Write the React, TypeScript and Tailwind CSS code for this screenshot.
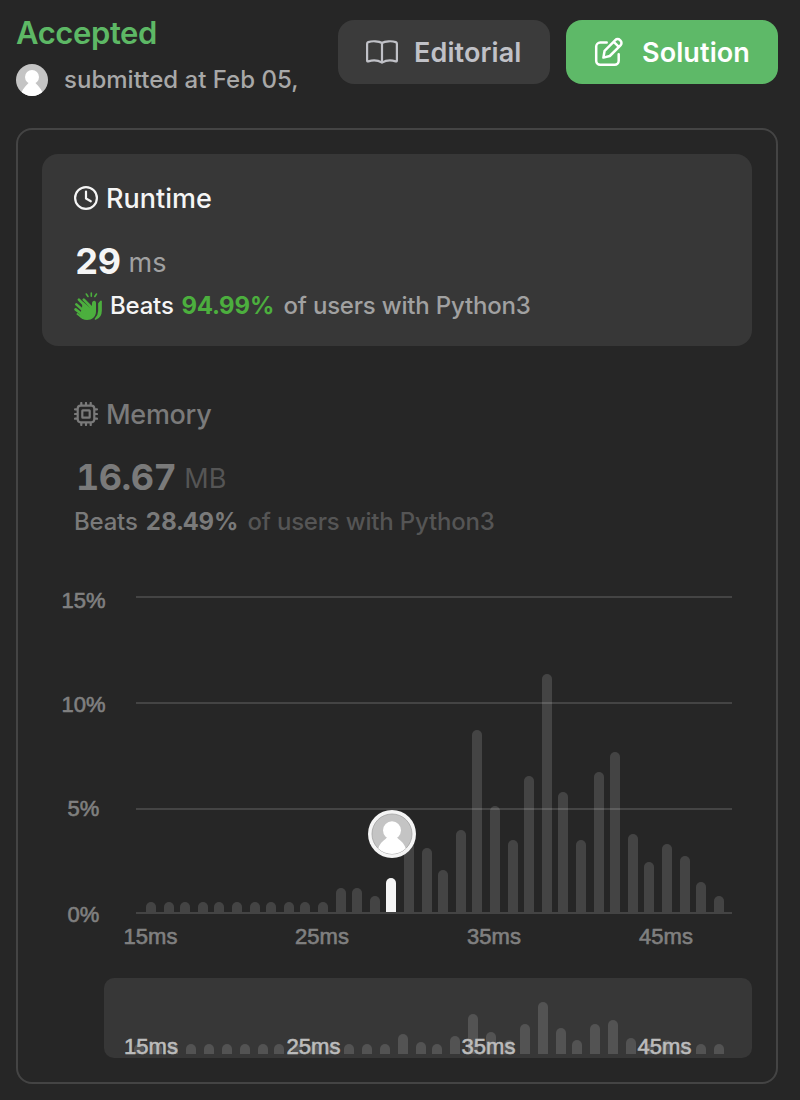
const BASELINE = 912;

const bars: [number, number][] = [
  [146, 902], [164, 902], [180, 902], [198, 902], [214, 902], [232, 902], [250, 902],
  [266, 902], [284, 902], [300, 902], [318, 902], [336, 888], [352, 888], [370, 896],
  [386, 878], [404, 840], [422, 848], [438, 870], [456, 830], [472, 730], [490, 806],
  [508, 840], [524, 776], [542, 674], [558, 792], [576, 840], [594, 772], [610, 752],
  [628, 834], [644, 862], [662, 844], [680, 856], [696, 882], [714, 896],
];

const miniBars: [number, number][] = [
  [134, 1044], [152, 1044], [168, 1044], [186, 1044], [204, 1044], [222, 1044], [240, 1044],
  [258, 1044], [274, 1044], [292, 1044], [310, 1044], [328, 1044], [344, 1044], [362, 1044],
  [380, 1044], [398, 1034], [416, 1042], [432, 1044], [450, 1036], [468, 1014], [486, 1032],
  [504, 1040], [520, 1024], [538, 1002], [556, 1028], [572, 1040], [590, 1024], [608, 1020],
  [626, 1038], [644, 1044], [662, 1040], [680, 1044], [696, 1044], [714, 1044],
];

function barPath(x: number, top: number, bottom: number) {
  return `M${x} ${bottom}V${top + 5}a5 5 0 0 1 10 0V${bottom}Z`;
}

function Avatar({ className }: { className?: string }) {
  return (
    <svg viewBox="0 0 32 32" className={className}>
      <clipPath id="avatar-clip">
        <circle cx="16" cy="16" r="16" />
      </clipPath>
      <g clipPath="url(#avatar-clip)">
        <rect width="32" height="32" fill="#c4c4c4" />
        <circle cx="16" cy="13" r="7" fill="#fff" />
        <path d="M4.500 32C6 24.500 10.500 21.500 12.500 19h7c2 2.500 6.500 5.500 8 13Z" fill="#fff" />
      </g>
    </svg>
  );
}

function BookIcon() {
  return (
    <svg width="34" height="28" viewBox="0 0 34 28" fill="none" stroke="currentColor" strokeWidth="2.2" strokeLinejoin="round" strokeLinecap="round">
      <path d="M17 5C14 3 7 2.800 3.200 4.100Q2.100 4.500 2.100 5.700V22.400Q2.100 23.700 3.300 23.400C7.500 22 13 22.200 17 24.600C21 22.200 26.500 22 30.700 23.400Q31.900 23.700 31.900 22.400V5.700Q31.900 4.500 30.800 4.100C27 2.800 20 3 17 5ZM17 5V24.600" />
    </svg>
  );
}

function PenIcon() {
  return (
    <svg width="30" height="30" viewBox="0 0 30 30" fill="none" stroke="currentColor" strokeWidth="2.500" strokeLinejoin="round" strokeLinecap="round">
      <path d="M12.700 5.600H6.200a4 4 0 0 0-4 4V23.700a4 4 0 0 0 4 4H20.700a4 4 0 0 0 4-4V17.200" />
      <path d="m9.400 20.600 1.200-6.800L21.300 3.100a3.300 3.300 0 0 1 4.700 0l.5.500a3.300 3.300 0 0 1 0 4.700L15.800 19l-6.400 1.600ZM19.800 4.800l5 5" />
    </svg>
  );
}

function ClockIcon() {
  return (
    <svg width="24" height="24" viewBox="0 0 24 24" fill="none" stroke="currentColor" strokeWidth="2.200" strokeLinecap="round" strokeLinejoin="round">
      <circle cx="12" cy="12" r="10.900" />
      <path d="M12 5.500v7l4.800 2.800" />
    </svg>
  );
}

function ChipIcon() {
  return (
    <svg width="24" height="24" viewBox="0 0 24 24" fill="none" stroke="currentColor" strokeWidth="2.200" strokeLinecap="round" strokeLinejoin="round">
      <rect x="3.700" y="3.700" width="16.600" height="16.600" rx="3" />
      <rect x="8.300" y="8.300" width="7.400" height="7.400" rx="0.500" />
      <path d="M7.300 1v2M12 1v2M16.700 1v2M7.300 21v2M12 21v2M16.700 21v2M1 7.300h2M1 12h2M1 16.700h2M21 7.300h2M21 12h2M21 16.700h2" />
    </svg>
  );
}

function ClapIcon() {
  return (
    <svg width="28" height="28" viewBox="0 0 28 28" fill="none" stroke="currentColor" strokeLinecap="round" className="text-[#4caf3e]">
      <path
        d="M8.500 9.500 16.200 15.800C17.800 16 18 14.500 18 11.500C18 9.500 19.100 8.700 20.200 8.700C21.500 8.700 22 9.700 22 11V19.500C22 24.500 18 28 13 28C9.500 28 7.500 26.500 5.500 24.500L8 16Z"
        fill="currentColor"
        stroke="none"
      />
      <path d="M9.800 7.600 17 15M4.900 7.600 14 17M2.400 12.400 11.500 20.500M1.600 17.400 9.500 23.500" strokeWidth="2.600" />
      <path d="M3.500 22 9 26" strokeWidth="2" />
      <path d="M27 9.300V18.500C27 22.500 25 25.800 21.500 27C23.800 24.500 25 22 25 19V11.500Z" fill="currentColor" strokeWidth="1.700" strokeLinejoin="round" />
      <path d="M12.300 2 14 4.500M17.300 1V4.300M22.500 2 20.800 4.500" strokeWidth="1.600" />
    </svg>
  );
}

function Chart() {
  return (
    <svg
      width="730"
      height="500"
      viewBox="34 572 730 500"
      className="block"
      fontFamily="'Liberation Sans', Arial, sans-serif"
      fontSize="22"
      textAnchor="middle"
    >
      {[596, 702, 808, 912].map((y) => (
        <rect key={y} x="136" y={y} width="596" height="2" fill="#444444" />
      ))}
      {bars.map(([x, top]) => (
        <path
          key={x}
          d={barPath(x, top, BASELINE)}
          fill={x === 386 ? "#f5f5f5" : "#ffffff"}
          fillOpacity={x === 386 ? 1 : 0.14}
        />
      ))}
      <g fill="#808080" stroke="#808080" strokeWidth="0.600">
        <text x="83.500" y="608">15%</text>
        <text x="83.500" y="712">10%</text>
        <text x="83.500" y="816">5%</text>
        <text x="83.500" y="922">0%</text>
        <text x="150.500" y="944">15ms</text>
        <text x="322" y="944">25ms</text>
        <text x="494" y="944">35ms</text>
        <text x="666" y="944">45ms</text>
      </g>
      <circle cx="392" cy="834" r="24" fill="#f5f5f5" />
      <circle cx="392" cy="834" r="20" fill="#c4c4c4" stroke="#a3a3a3" strokeWidth="0.800" />
      <circle cx="392" cy="830.300" r="9" fill="#fff" />
      <path d="M378.300 848.500c1.700-6.500 6.700-8.500 9.200-11.500h9c2.500 3 7.500 5 9.200 11.500a20 20 0 0 1-27.400 0Z" fill="#fff" />
      <rect x="104" y="978" width="648" height="80" rx="10" fill="#373737" />
      {miniBars.map(([x, top]) => (
        <path key={x} d={barPath(x, top, 1054)} fill="#535353" />
      ))}
      <g fill="#bcbcbc" stroke="#bcbcbc" strokeWidth="0.600">
        <text x="151" y="1054">15ms</text>
        <text x="313.500" y="1054">25ms</text>
        <text x="488.500" y="1054">35ms</text>
        <text x="664.500" y="1054">45ms</text>
      </g>
    </svg>
  );
}

export default function App() {
  return (
    <div className="flex h-[1100px] w-[800px] flex-col overflow-hidden bg-[#262626] pl-4 pr-[22px] font-['Inter','Liberation_Sans',sans-serif] whitespace-nowrap">
      <header className="flex h-32 justify-between pt-4">
        <div>
          <h1 className="text-[31px] font-semibold leading-[34px] tracking-[-0.4px] text-[#5db865]">Accepted</h1>
          <div className="mt-[14px] flex h-8 items-center gap-4">
            <Avatar className="size-8" />
            <span className="text-[24px] font-medium tracking-[0.02px] text-[#a8a8a8]">submitted at Feb 05,</span>
          </div>
        </div>
        <div className="flex gap-4 pt-1">
          <button className="flex h-16 w-[212px] items-center rounded-2xl bg-[#3b3b3b] pl-[27px] text-[27px] font-semibold text-[#c0c1c7]">
            <BookIcon />
            <span className="ml-[15px] pt-0.5 tracking-[0.1px]">Editorial</span>
          </button>
          <button className="flex h-16 w-[212px] items-center rounded-2xl bg-[#5eb968] pl-7 text-[27px] font-semibold text-white">
            <PenIcon />
            <span className="ml-[18px] pt-0.5 tracking-[0.1px]">Solution</span>
          </button>
        </div>
      </header>

      <main className="flex h-[956px] w-[762px] flex-col rounded-2xl border-2 border-[#444444] px-6 pt-6">
        <section className="h-48 w-[710px] rounded-2xl bg-[#373737] px-8 pt-6 text-[#f5f5f5]">
          <div className="flex h-10 items-center gap-2">
            <ClockIcon />
            <span className="pt-0.5 text-[27px] font-medium">Runtime</span>
          </div>
          <div className="mt-6 flex h-10 items-center gap-2 leading-10">
            <span className="pb-0.5 pl-px text-[36px] font-bold tracking-[-0.5px] tabular-nums">29</span>
            <span className="pt-px text-[27px] text-[#a1a1a1]">ms</span>
          </div>
          <div className="mt-1.5 flex h-9 items-center text-[24px] font-medium tracking-[-0.2px]">
            <ClapIcon />
            <span className="ml-2">Beats</span>
            <span className="ml-2 font-bold tabular-nums tracking-normal text-[#4caf3e]">94.99%</span>
            <span className="ml-[9px] text-[#a1a1a1]">of users with Python3</span>
          </div>
        </section>

        <section className="mt-6 h-48 w-[710px] px-8 pt-6 text-[#7a7a7a]">
          <div className="flex h-10 items-center gap-2">
            <ChipIcon />
            <span className="pt-0.5 text-[27px] font-medium tracking-[-0.3px]">Memory</span>
          </div>
          <div className="mt-6 flex h-10 items-center gap-2 leading-10">
            <span className="pb-0.5 pl-0.5 text-[36px] font-bold tracking-[-0.5px] tabular-nums">16.67</span>
            <span className="pt-px text-[27px] text-[#555555]">MB</span>
          </div>
          <div className="mt-1.5 flex h-9 items-center text-[24px] font-medium tracking-[-0.2px]">
            <span>Beats</span>
            <span className="ml-2 font-bold tabular-nums tracking-normal">28.49%</span>
            <span className="ml-[9px] text-[#555555]">of users with Python3</span>
          </div>
        </section>

        <div className="-ml-2 mt-2.5 w-[730px]">
          <Chart />
        </div>
      </main>
    </div>
  );
}
